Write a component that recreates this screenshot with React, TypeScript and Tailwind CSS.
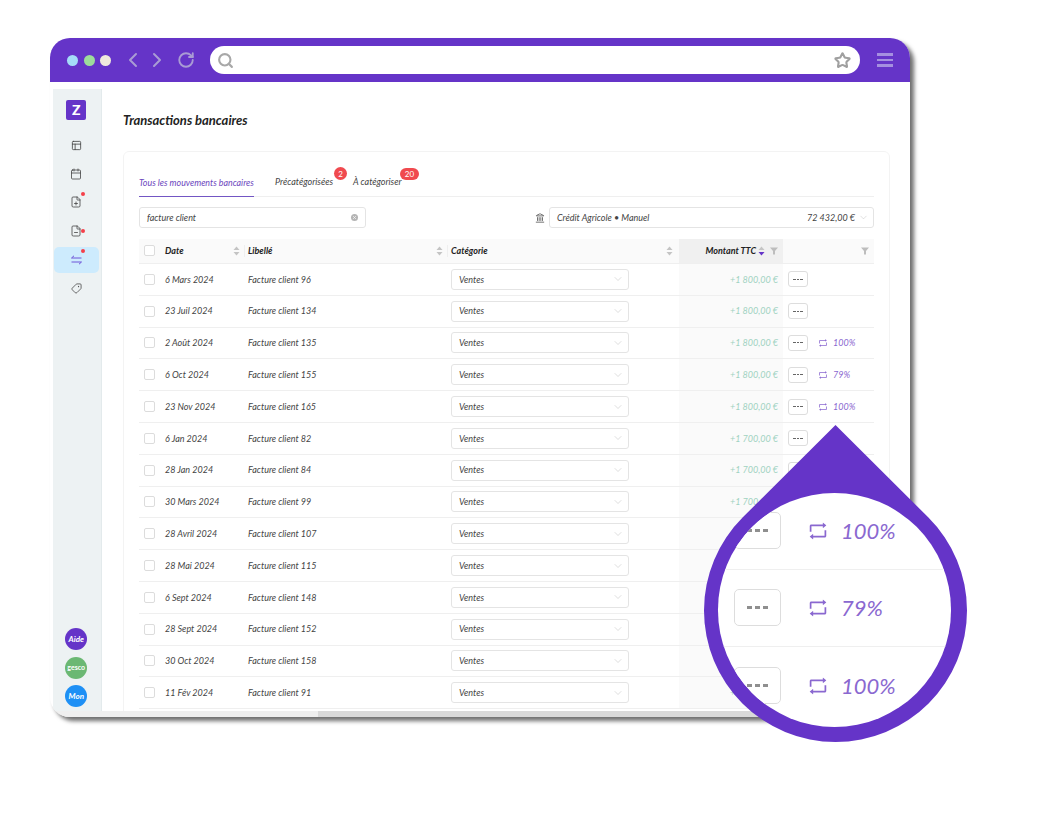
import React from "react";
import { ChevronDown, ChevronLeft, ChevronRight, RotateCw, Search, Star, PanelsTopLeft, Calendar, FilePlus, FileMinus, Tag, Landmark, X } from "lucide-react";
import { AiOutlineRetweet } from "react-icons/ai";

const rows: [string, string, string][] = [
  ["6 Mars 2024", "Facture client 96", "+1 800,00 €"],
  ["23 Juil 2024", "Facture client 134", "+1 800,00 €"],
  ["2 Août 2024", "Facture client 135", "+1 800,00 €"],
  ["6 Oct 2024", "Facture client 155", "+1 800,00 €"],
  ["23 Nov 2024", "Facture client 165", "+1 800,00 €"],
  ["6 Jan 2024", "Facture client 82", "+1 700,00 €"],
  ["28 Jan 2024", "Facture client 84", "+1 700,00 €"],
  ["30 Mars 2024", "Facture client 99", "+1 700,00 €"],
  ["28 Avril 2024", "Facture client 107", "+1 700,00 €"],
  ["28 Mai 2024", "Facture client 115", "+1 700,00 €"],
  ["6 Sept 2024", "Facture client 148", "+1 700,00 €"],
  ["28 Sept 2024", "Facture client 152", "+1 700,00 €"],
  ["30 Oct 2024", "Facture client 158", "+1 700,00 €"],
  ["11 Fév 2024", "Facture client 91", "+1 700,00 €"],
];
const pct: Record<number, string> = { 2: "100%", 3: "79%", 4: "100%" };

function Sort({ active = false }: { active?: boolean }) {
  return (
    <svg width="7" height="10" viewBox="0 0 7 10" className="shrink-0">
      <path d="M3.5 0.5 L6.5 4 H0.5 Z" fill="#c4c4c4" />
      <path d="M3.5 9.5 L6.5 6 H0.5 Z" fill={active ? "#6534c8" : "#c4c4c4"} />
    </svg>
  );
}
function Funnel() {
  return (
    <svg width="8" height="8" viewBox="0 0 8 8" className="shrink-0">
      <path d="M0 0.5 H8 L5 4 V7.5 H3 V4 Z" fill="#bdbdbd" />
    </svg>
  );
}
function Box() {
  return <span className="block w-[11px] h-[11px] rounded-[2px] border border-[#dcdcdc] bg-white" />;
}
function Dashes({ big = false }: { big?: boolean }) {
  const c = big ? "w-[5px] h-[3px] bg-[#8f8f8f]" : "w-[2.5px] h-px bg-[#666666]";
  return (
    <span className={big ? "flex gap-[3px]" : "flex gap-[1px]"}>
      <span className={c} />
      <span className={c} />
      <span className={c} />
    </span>
  );
}

function SideItem({ children, dot, active }: { children: React.ReactNode; dot?: string; active?: boolean }) {
  return (
    <div className={active ? "relative h-[26px] my-[1.3px] w-[45px] flex items-center justify-center rounded-[5px] bg-[#cdebfd]" : "relative h-[28.6px] w-[47px] flex items-center justify-center"}>
      {children}
      {dot === "top" && <span className="absolute left-[28.5px] top-[4px] w-[4px] h-[4px] rounded-full bg-[#f4404a]" />}
      {dot === "active" && <span className="absolute left-[27px] top-[2px] w-[4px] h-[4px] rounded-full bg-[#f4404a]" />}
      {dot === "side" && <span className="absolute left-[28px] top-[12px] w-[4px] h-[4px] rounded-full bg-[#f4404a]" />}
    </div>
  );
}

export default function App() {
  return (
    <div className="relative w-[1037px] h-[813px] overflow-hidden bg-white pl-[50px] pt-[38px] italic text-[#444444]" style={{ fontFamily: "Lato, 'Liberation Sans', sans-serif" }}>
      <div className="flex flex-col w-[860px] h-[679px] rounded-[20px] overflow-hidden bg-white shadow-[4px_4px_4px_#6f6f6f]">
        {/* Browser bar */}
        <div className="flex items-center h-[44px] shrink-0 bg-[#6534c8] pl-[17px] not-italic">
          <span className="w-[11px] h-[11px] rounded-full bg-[#a5dcf8]" />
          <span className="w-[11px] h-[11px] rounded-full bg-[#9ddc9b] ml-[6px]" />
          <span className="w-[11px] h-[11px] rounded-full bg-[#efe9dd] ml-[5px]" />
          <ChevronLeft size={24} strokeWidth={2} className="text-[#a99bd4] ml-[10px]" />
          <ChevronRight size={24} strokeWidth={2} className="text-[#a99bd4]" />
          <RotateCw size={18} strokeWidth={2.5} className="text-[#a99bd4] ml-[8px]" />
          <div className="flex items-center justify-between w-[650px] h-[28px] ml-[15px] rounded-full bg-white pl-[7px] pr-[9px]">
            <Search size={17} strokeWidth={3} className="text-[#a8a8a8]" />
            <Star size={17} strokeWidth={3} className="text-[#a0a0a0]" />
          </div>
          <div className="flex flex-col gap-[3px] w-[16px] ml-[17px]">
            <span className="h-[2.5px] bg-[#a58fe0]" />
            <span className="h-[2.5px] bg-[#a58fe0]" />
            <span className="h-[2.5px] bg-[#a58fe0]" />
          </div>
        </div>

        <div className="flex flex-1 min-h-0">
          {/* Sidebar */}
          <aside className="flex flex-col items-center w-[49px] ml-[3px] mt-[7px] shrink-0 bg-[#edf2f3] pb-[4px] pr-[1.5px] border-r border-[#e3eaec]">
            <div className="flex items-center justify-center w-[20px] h-[20px] mt-[11px] mb-[11px] rounded-[2px] bg-[#6534c8] text-white text-[14px] font-black not-italic leading-none">Z</div>
            <SideItem><PanelsTopLeft size={11} strokeWidth={1.8} className="text-[#444444]" /></SideItem>
            <SideItem><Calendar size={12} strokeWidth={1.6} className="text-[#444444]" /></SideItem>
            <SideItem dot="top"><FilePlus size={12} strokeWidth={1.6} className="text-[#444444]" /></SideItem>
            <SideItem dot="side"><FileMinus size={12} strokeWidth={1.6} className="text-[#444444]" /></SideItem>
            <SideItem dot="active" active>
              <svg width="11" height="10" viewBox="0 0 11 10" fill="none" stroke="#6f55d8" strokeWidth="1">
                <path d="M0.5 3 H10.5 M0.5 3 L3 0.8" />
                <path d="M10.5 7 H0.5 M10.5 7 L8 9.2" />
              </svg>
            </SideItem>
            <SideItem><Tag size={11} strokeWidth={1.7} className="text-[#444444] rotate-90" /></SideItem>
            <div className="flex flex-col items-center gap-[6.5px] mt-auto not-italic">
              <span className="flex items-center justify-center w-[22px] h-[22px] rounded-full bg-[#6534c8] text-white text-[8px] font-bold italic">Aide</span>
              <span className="flex items-center justify-center w-[22px] h-[22px] rounded-full bg-[#6bb873] text-white text-[7px] font-bold">gesco</span>
              <span className="flex items-center justify-center w-[22px] h-[22px] rounded-full bg-[#1e90f5] text-white text-[8px] font-bold italic">Mon</span>
            </div>
          </aside>

          {/* Main */}
          <main className="flex-1 min-w-0 overflow-hidden pl-[21px] pt-[30px]">
            <h1 className="h-[16px] leading-[16px] text-[13px] font-bold text-[#222222]">Transactions bancaires</h1>
            <section className="w-[767px] mt-[23px] rounded-t-[6px] border border-[#f3f3f3] px-[15px] h-[600px]">
              {/* Tabs */}
              <div className="flex h-[45px] items-end border-b border-[#efefef] text-[9px]">
                <div className="flex items-center h-[30px] border-b border-[#7356c4] -mb-px pt-[2px] text-[#6b45bd] text-[8.85px] w-[115px] whitespace-nowrap">Tous les mouvements bancaires</div>
                <div className="relative flex items-center h-[30px] pt-[2px] ml-[21px] w-[58px] whitespace-nowrap">
                  Précatégorisées
                  <span className="absolute left-[59px] top-[1px] flex items-center justify-center w-[13px] h-[13px] rounded-full bg-[#f04a4f] text-white text-[8px] not-italic">2</span>
                </div>
                <div className="relative flex items-center h-[30px] pt-[2px] ml-[20px] w-[49px] whitespace-nowrap">
                  À catégoriser
                  <span className="absolute left-[47px] top-[2px] flex items-center justify-center w-[19px] h-[12px] rounded-full bg-[#f04a4f] text-white text-[8px] not-italic">20</span>
                </div>
              </div>
              {/* Filters */}
              <div className="flex items-center mt-[10px] h-[21px] text-[9px]">
                <div className="flex items-center justify-between w-[227px] h-full rounded-[3px] border border-[#e4e4e4] pl-[7px] pr-[7px]">
                  <span>facture client</span>
                  <span className="flex items-center justify-center w-[7px] h-[7px] rounded-full bg-[#b5b5b5]"><X size={5} strokeWidth={3} className="text-white" /></span>
                </div>
                <Landmark size={10} strokeWidth={2} className="ml-auto mr-[4px] text-[#555555]" />
                <div className="flex items-center w-[325px] h-full rounded-[3px] border border-[#e4e4e4] pl-[7px] pr-[4px]">
                  <span>Crédit Agricole • Manuel</span>
                  <span className="ml-auto">72 432,00 €</span>
                  <ChevronDown size={11} strokeWidth={1} className="ml-[3px] text-[#bdbdbd]" />
                </div>
              </div>
              {/* Table head */}
              <div className="grid grid-cols-[26px_83px_203px_228px_104px_91px] h-[25.5px] mt-[10.5px] bg-[#fafafa] border-b border-[#efefef] text-[9px] font-bold text-[#222222]">
                <div className="flex items-center pl-[5px]"><Box /></div>
                <div className="flex items-center justify-between pr-[3px]"><span>Date</span><span className="flex items-center gap-[4px]"><Sort /><span className="w-px h-[12px] bg-[#efefef]" /></span></div>
                <div className="flex items-center justify-between pr-[3px]"><span>Libellé</span><span className="flex items-center gap-[4px]"><Sort /><span className="w-px h-[12px] bg-[#efefef]" /></span></div>
                <div className="flex items-center justify-between pr-[6px]"><span>Catégorie</span><Sort /></div>
                <div className="flex items-center justify-end bg-[#f0f0f0] pr-[5px]"><span className="whitespace-nowrap">Montant TTC</span><span className="ml-[2px]"><Sort active /></span><span className="ml-[5px]"><Funnel /></span></div>
                <div className="flex items-center justify-end pr-[5px]"><Funnel /></div>
              </div>
              {/* Rows */}
              {rows.map((r, i) => (
                <div key={i} className="grid grid-cols-[26px_83px_203px_228px_104px_91px] h-[31.8px] border-b border-[#efefef] text-[9px]">
                  <div className="flex items-center pl-[5px]"><Box /></div>
                  <div className="flex items-center whitespace-nowrap">{r[0]}</div>
                  <div className="flex items-center whitespace-nowrap">{r[1]}</div>
                  <div className="flex items-center">
                    <div className="flex items-center justify-between w-[178px] h-[21px] rounded-[3px] border border-[#e4e4e4] pl-[7px] pr-[4px]">
                      <span>Ventes</span>
                      <ChevronDown size={12} strokeWidth={1} className="text-[#bdbdbd]" />
                    </div>
                  </div>
                  <div className="flex items-center justify-end bg-[#fafafa] pr-[5px] text-[#9fd2c1] whitespace-nowrap">{r[2]}</div>
                  <div className="flex items-center pl-[5px]">
                    <span className="flex items-center justify-center w-[20px] h-[16px] rounded-[3px] border border-[#dddddd] bg-white"><Dashes /></span>
                    {pct[i] && (
                      <span className="flex items-center text-[#8a68d0] ml-[10px]">
                        <AiOutlineRetweet size={10} />
                        <span className="ml-[5px]">{pct[i]}</span>
                      </span>
                    )}
                  </div>
                </div>
              ))}
            </section>
          </main>
        </div>

        {/* Horizontal scrollbar */}
        <div className="h-[6px] shrink-0 bg-[#d9d9d9]">
          <div className="w-[268px] h-full bg-[#efefef]" />
        </div>
      </div>

      {/* Magnifying lens */}
      <svg width="263" height="318" viewBox="0 0 263 318" className="absolute left-[704px] top-[425px]">
        <path d="M131.5 0 L224.2 92.3 A131.5 131.5 0 1 1 38.8 92.3 Z" fill="#6534c8" />
      </svg>
      <div className="absolute left-[718px] top-[493px] w-[233px] h-[234px] rounded-full overflow-hidden bg-white text-[#8a68d0] text-[22px]">
        <div className="flex items-center h-[76.5px] pl-[16px] border-b border-[#efefef]">
          <span className="flex items-center justify-center shrink-0 w-[47px] h-[37px] rounded-[5px] border border-[#dddddd] bg-white"><Dashes big /></span>
          <AiOutlineRetweet size={22} className="ml-[26px] shrink-0" />
          <span className="ml-[12px] leading-none">100%</span>
        </div>
        <div className="flex items-center h-[77.5px] pl-[16px] border-b border-[#efefef]">
          <span className="flex items-center justify-center shrink-0 w-[47px] h-[37px] rounded-[5px] border border-[#dddddd] bg-white"><Dashes big /></span>
          <AiOutlineRetweet size={22} className="ml-[26px] shrink-0" />
          <span className="ml-[12px] leading-none">79%</span>
        </div>
        <div className="flex items-center h-[77.5px] pl-[16px]">
          <span className="flex items-center justify-center shrink-0 w-[47px] h-[37px] rounded-[5px] border border-[#dddddd] bg-white"><Dashes big /></span>
          <AiOutlineRetweet size={22} className="ml-[26px] shrink-0" />
          <span className="ml-[12px] leading-none">100%</span>
        </div>
      </div>
    </div>
  );
}
